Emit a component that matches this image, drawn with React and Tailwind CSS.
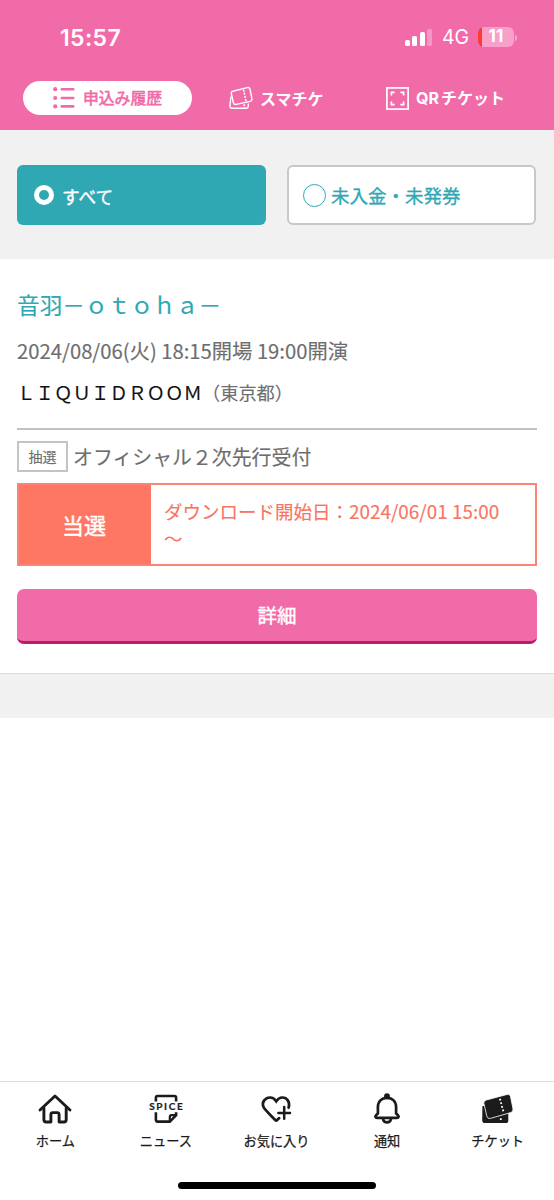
import clsx from 'clsx'

const headerTabs = [
    { id: 'history', label: '申込み履歴', icon: ListIcon, active: true, className: 'w-[169px] gap-[8px] text-[15.8px]' },
    { id: 'smart', label: 'スマチケ', icon: TicketOutlineIcon, className: 'ml-[37px] w-[100px] gap-[7px] text-[16px]' },
    { id: 'qr', prefix: 'QR', label: 'チケット', icon: QrIcon, className: 'ml-[57px] w-[125px] gap-[7px] text-[16px]' },
]

const navItems = [
    { id: 'home', label: 'ホーム', icon: HomeIcon },
    { id: 'news', label: 'ニュース', icon: NewsIcon },
    { id: 'favorites', label: 'お気に入り', icon: HeartPlusIcon },
    { id: 'notice', label: '通知', icon: BellIcon },
    { id: 'ticket', label: 'チケット', icon: TicketIcon },
]

function ListIcon() {
    return (
        <svg width="22" height="22" viewBox="0 0 22 22" className="shrink-0" fill="currentColor">
            {[2.2, 11, 19.4].map((y) => (
                <g key={y}>
                    <circle cx="2.2" cy={y} r="2.1" />
                    <rect x="7.5" y={y - 1.3} width="14" height="2.6" rx="1.3" />
                </g>
            ))}
        </svg>
    )
}

function TicketOutlineIcon() {
    return (
        <svg width="24" height="24" viewBox="0 0 24 24" className="shrink-0" fill="none" stroke="currentColor" strokeWidth="1.4" strokeLinejoin="round">
            <path d="M2 10.5L.9 19.5Q.8 22.2 3 22.2H16.8Q19.2 22.2 19.3 20V17.4" />
            <path d="M3.9 5.2L18.2 1.6Q20.4 1.1 21 3.2L22.9 12.6Q23.3 14.8 21.1 15.4L7.2 18.4Q5 18.9 4.4 16.8L2.4 8Q2 5.8 3.9 5.2Z" />
            <path d="M14.6 3.6L17 15.6M15.2 18.3V21.4" strokeDasharray="2 1.2" strokeWidth="1.6" />
        </svg>
    )
}

function QrIcon() {
    return (
        <svg width="23" height="23" viewBox="0 0 23 23" className="shrink-0" fill="none" stroke="currentColor" strokeWidth="1.7">
            <rect x=".9" y=".9" width="21.2" height="21.2" />
            <path d="M5.4 8.6V5.4H8.6M14.4 5.4H17.6V8.6M17.6 14.4V17.6H14.4M8.6 17.6H5.4V14.4" />
        </svg>
    )
}

function HomeIcon() {
    return (
        <svg width="36" height="32" viewBox="0 0 36 32" fill="none" stroke="currentColor" strokeWidth="2.9" strokeLinecap="round" strokeLinejoin="round">
            <path d="M3 17L18 3L33 17" />
            <path d="M6.9 15V26.8Q6.9 29 9.1 29H13.9V21.6Q13.9 19.6 15.9 19.6H20.1Q22.1 19.6 22.1 21.6V29H27Q29.2 29 29.2 26.8V15" />
        </svg>
    )
}

function NewsIcon() {
    return (
        <svg width="36" height="32" viewBox="0 0 36 32" fill="none" stroke="currentColor" strokeWidth="2.6">
            <path d="M7.9 8.4V4.6Q7.9 3 9.5 3H26.5Q28.1 3 28.1 4.6V8.4" />
            <path d="M7.9 19.2V26.8Q7.9 28.6 9.6 28.6H21.8L28.1 22.3V19.2" />
            <path d="M21.8 28V24Q21.8 22.2 23.6 22.2H27.5" strokeWidth="2.2" />
            <text x="1.2" y="17.4" fill="currentColor" stroke="currentColor" strokeWidth=".2" textLength="33.5" lengthAdjust="spacing" className="font-[Lato,sans-serif] text-[10px] font-bold">SPICE</text>
        </svg>
    )
}

function HeartPlusIcon() {
    return (
        <svg width="36" height="32" viewBox="0 0 36 32" fill="none" stroke="currentColor" strokeWidth="2.7" strokeLinecap="round">
            <path d="M30.6 14.6C32.5 9 28.8 4.3 24.2 4.5C21.5 4.6 19.7 6.1 18.2 8.3C16.6 5.8 14.5 4.4 11.9 4.5C6.8 4.7 3.4 9.5 5.5 14C6.3 16 9.2 18.8 17.2 27Q18.2 28 19.2 27L21.2 25.1" />
            <path d="M26.2 14V25.8M20.4 19.9H32" strokeWidth="2.5" />
        </svg>
    )
}

function BellIcon() {
    return (
        <svg width="36" height="32" viewBox="0 0 36 32" fill="none" stroke="currentColor" strokeWidth="2.7" strokeLinecap="round" strokeLinejoin="round">
            <circle cx="18" cy="3.2" r="1.6" fill="currentColor" />
            <path d="M8.9 20.5V14C8.9 8.5 12.6 4.8 18 4.8C23.4 4.8 27.1 8.5 27.1 14V20.5L29 22.3C30.2 23.6 29.6 24.9 28 24.9H8C6.4 24.9 5.8 23.6 7 22.3Z" />
            <path d="M14.1 26.4C14.6 28.3 16 29.3 18 29.3C20 29.3 21.4 28.3 21.9 26.4" />
        </svg>
    )
}

function TicketIcon() {
    return (
        <svg width="36" height="32" viewBox="0 0 36 32">
            <path d="M2.4 13H5L8 22L28.3 18V27.4Q28.3 30 25.7 30H5Q2.2 30 2.2 27.2Z" fill="currentColor" />
            <path d="M6.4 7L27 1.5Q29.8 .8 30.5 3.5L33 16Q33.4 18.8 30.7 19.6L10.4 25.4Q7.6 26.1 6.9 23.4L3.9 10.6Q3.3 7.8 6.4 7Z" fill="currentColor" stroke="#fff" strokeWidth=".8" />
            <path d="M19.9 5.8L23.6 19.2M20.8 25.2V28" stroke="#fff" strokeWidth="1.8" strokeDasharray="1.8 1.9" />
        </svg>
    )
}

function StatusBar() {
    return (
        <div className="flex h-[74px] items-center pt-px pl-[60px] font-[Inter,sans-serif]">
            <span className="w-[63px] whitespace-nowrap pt-px text-[23px] font-semibold tracking-[0.35px]">15:57</span>
            <div className="ml-[282px] flex h-[17px] items-end gap-[2.3px]">
                <span className="h-[6px] w-[5px] rounded-[1.5px] bg-white" />
                <span className="h-[10px] w-[5px] rounded-[1.5px] bg-white" />
                <span className="h-[14px] w-[5px] rounded-[1.5px] bg-white" />
                <span className="h-[17px] w-[5px] rounded-[1.5px] bg-white/30" />
            </div>
            <span className="ml-[10px] w-[28px] whitespace-nowrap pt-px text-[19.5px]">4G</span>
            <div className="mb-px ml-[8px] flex h-[20px] w-[36px] items-center justify-center overflow-hidden rounded-[6px] bg-linear-to-r from-[#fd3b30] from-11% to-[#f8a0c9] to-11% text-[17px] font-bold">11</div>
            <span className="ml-px h-[6px] w-[2px] rounded-r-full bg-white/40" />
        </div>
    )
}

function HeaderTabs() {
    return (
        <div className="mt-[7px] flex items-center pl-[23px]">
            {headerTabs.map(({ id, prefix, label, icon: Icon, active, className }) => (
                <button
                    key={id}
                    className={clsx('flex h-[34px] items-center whitespace-nowrap rounded-full', className, active ? 'bg-white pl-[30px] text-[#f26ba9] [-webkit-text-stroke:0.6px]' : 'font-bold')}
                >
                    <Icon />
                    <span className="-mt-px">
                        {prefix && <span className="mr-[2px] font-[Inter,sans-serif]">{prefix}</span>}
                        {label}
                    </span>
                </button>
            ))}
        </div>
    )
}

function Filters() {
    return (
        <div className="flex h-[129px] gap-[21px] bg-[#f1f1f1] px-[17px] pt-[35px] [-webkit-text-stroke:0.35px]">
            <button className="flex h-[60px] w-[249px] items-center gap-[8px] rounded-[6px] bg-[#30a8b4] pl-[17px] text-[17.7px] text-white">
                <span className="size-[20px] rounded-full border-5 border-white" />
                <span className="pt-[2px]">すべて</span>
            </button>
            <button className="flex h-[60px] w-[249px] items-center gap-[5px] rounded-[6px] border-2 border-[#c8c8c8] bg-white pl-[14px] text-[18.5px] text-[#30a8b4]">
                <span className="size-[23px] rounded-full border border-[#30a8b4]" />
                <span className="pt-[2px]">未入金・未発券</span>
            </button>
        </div>
    )
}

function TicketCard() {
    return (
        <section className="h-[415px] border-b border-[#dcdcdc] px-[17px] pt-[29px] text-[#6e6e6e] [-webkit-text-stroke:0.15px]">
            <h2 className="text-[22.7px] leading-[34px] text-[#30a8b4]">音羽－ｏｔｏｈａ－</h2>
            <p className="mt-[13px] text-[20.25px] leading-[32px]">2024/08/06(火) 18:15開場 19:00開演</p>
            <p className="mt-[10px] flex text-[18.2px] leading-[30px]">
                <span className="text-[18.5px] text-[#111]">ＬＩＱＵＩＤＲＯＯＭ</span>（東京都）
            </p>
            <hr className="mt-[21px] border-t-2 border-[#c2c2c2]" />
            <div className="mt-[11px] flex h-[32px] items-center gap-[5px]">
                <span className="mb-px flex h-[31px] w-[51px] items-center justify-center border-2 border-[#c4c4c4] text-[14px]">抽選</span>
                <span className="text-[19.9px]">オフィシャル２次先行受付</span>
            </div>
            <div className="mt-[10px] flex h-[83px] border-2 border-[#fa8577] text-[#f97562]">
                <div className="flex w-[132px] items-center justify-center bg-[#fe7763] pr-[2px] pb-px text-[22px] text-white [-webkit-text-stroke:0.4px]">当選</div>
                <p className="flex-1 pt-[12px] pl-[13px] text-[18.5px] leading-[27px]">
                    ダウンロード開始日：<span className="text-[18.9px]">2024/06/01 15:00</span><br />～
                </p>
            </div>
            <button className="mt-[23px] h-[55px] w-full rounded-[7px] border-b-3 border-[#b91c6d] bg-[#f26ba9] text-[19.5px] text-white [-webkit-text-stroke:0.4px]">詳細</button>
        </section>
    )
}

function BottomNav() {
    return (
        <nav className="flex h-[119px] flex-col items-center border-t border-[#dcdcdc] bg-white text-[#1b1b1b]">
            <div className="grid w-full grid-cols-5 pt-[11px] pr-px">
                {navItems.map(({ id, label, icon: Icon }) => (
                    <button key={id} className="flex flex-col items-center gap-[6px] whitespace-nowrap text-[13.2px] leading-[20px] [-webkit-text-stroke:0.25px]">
                        <Icon />
                        {label}
                    </button>
                ))}
            </div>
            <div className="mt-[31px] h-[7px] w-[198px] rounded-full bg-black" />
        </nav>
    )
}

export default function App() {
    return (
        <div className="flex h-[1200px] w-[554px] flex-col overflow-hidden bg-white font-['Noto_Sans_CJK_JP',sans-serif]">
            <header className="h-[130px] shrink-0 bg-[#f26ba9] text-white">
                <StatusBar />
                <HeaderTabs />
            </header>
            <main className="flex-1">
                <Filters />
                <TicketCard />
                <div className="h-[44px] bg-[#f1f1f1]" />
            </main>
            <BottomNav />
        </div>
    )
}
